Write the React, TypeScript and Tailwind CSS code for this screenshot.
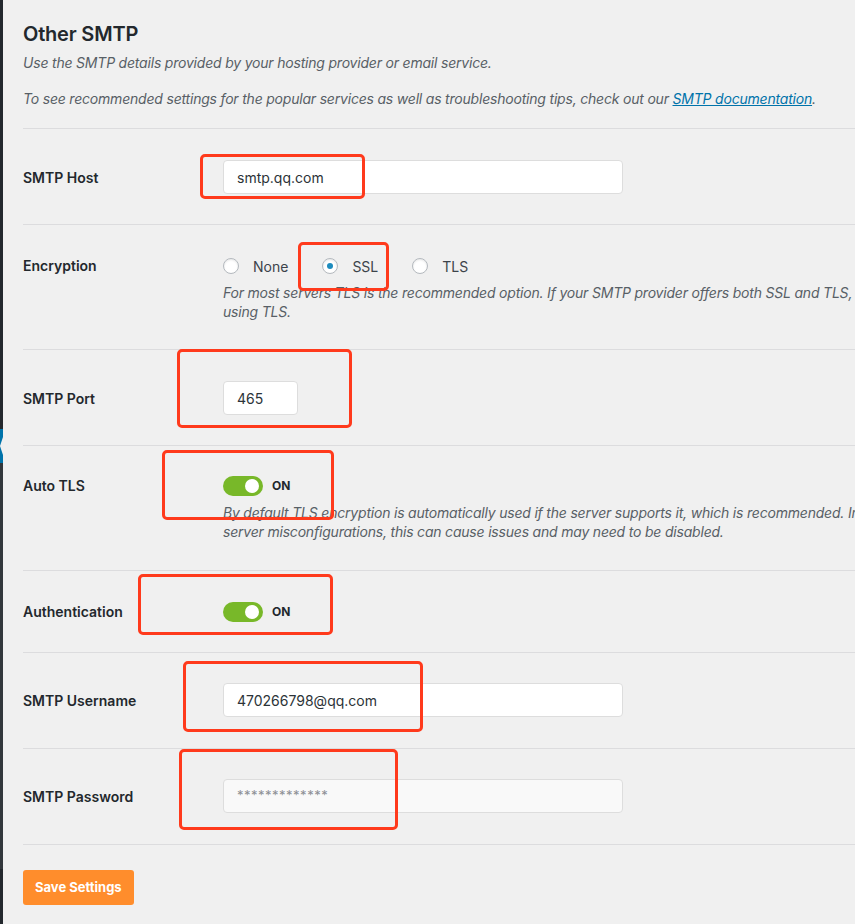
import React from "react";

const font = { fontFamily: "Inter, 'Liberation Sans', sans-serif" };

function Sidebar() {
  return (
    <div className="flex w-[3px] shrink-0 flex-col">
      <div className="h-[429px] bg-[#23282d]" />
      <div className="relative h-[34px] bg-[#0073aa]">
        <svg className="absolute left-0 top-[8px]" width="3" height="18" viewBox="0 0 3 18">
          <path d="M3 0 L0 9 L3 18 Z" fill="#f0f0f0" />
        </svg>
      </div>
      <div className="h-[406px] bg-[#32373c]" />
      <div className="flex-1 bg-[#23282d]" />
    </div>
  );
}

function Row({
  label,
  labelH,
  pt,
  pb,
  children,
}: {
  label: string;
  labelH: string;
  pt: string;
  pb: string;
  children: React.ReactNode;
}) {
  return (
    <div className={["flex border-t border-[#dcdcde]", pt, pb].join(" ")}>
      <div className={["flex w-[200px] shrink-0 items-center text-[14px] font-semibold text-[#23282d]", labelH].join(" ")}>
        {label}
      </div>
      <div className="flex-1">{children}</div>
    </div>
  );
}

function TextInput({ value, w, muted }: { value: string; w: string; muted?: boolean }) {
  return (
    <div
      className={[
        "flex h-[34px] items-center rounded-[4px] border border-[#dddddd] pl-[13px]",
        w,
        muted ? "bg-[#f9f9f9] text-[13px] tracking-[0.5px] text-[#8c8f94]" : "bg-white text-[14px] text-[#2c3338]",
      ].join(" ")}
    >
      {value}
    </div>
  );
}

function Radio({ label, checked }: { label: string; checked?: boolean }) {
  return (
    <div className="flex items-center">
      <span className="flex h-[16px] w-[16px] items-center justify-center rounded-full border border-[#b4b9be] bg-white shadow-[inset_0_1px_2px_rgba(0,0,0,0.1)]">
        {checked ? <span className="h-[6px] w-[6px] rounded-full bg-[#1e8cbe]" /> : null}
      </span>
      <span className="ml-[14px] text-[14px] text-[#3c434a]">{label}</span>
    </div>
  );
}

function Toggle() {
  return (
    <div className="flex h-[20px] items-center">
      <span className="flex h-[20px] w-[40px] items-center justify-end rounded-full bg-[#78b829] pr-[4px]">
        <span className="h-[14px] w-[14px] rounded-full bg-white" />
      </span>
      <span className="ml-[9px] text-[12px] font-bold text-[#23282d]">ON</span>
    </div>
  );
}

function Desc({ children }: { children: React.ReactNode }) {
  return (
    <div className="whitespace-nowrap text-[14px] italic leading-[19px] tracking-[-0.2px] text-[#585f66]">{children}</div>
  );
}

const marks = [
  "left-[200px] top-[154px] w-[165px] h-[45px]",
  "left-[298px] top-[242px] w-[91px] h-[49px]",
  "left-[177px] top-[349px] w-[175px] h-[79px]",
  "left-[162px] top-[450px] w-[172px] h-[70px]",
  "left-[138px] top-[574px] w-[195px] h-[61px]",
  "left-[183px] top-[661px] w-[240px] h-[71px]",
  "left-[179px] top-[749px] w-[219px] h-[81px]",
];

export default function App() {
  return (
    <div className="relative flex h-[924px] w-[855px] overflow-hidden bg-[#f0f0f0]" style={font}>
      <Sidebar />
      <main className="w-[1100px] shrink-0 pl-[20px] pt-[22px]">
        <h2 className="text-[20px] font-semibold leading-[24px] tracking-[-0.2px] text-[#23282d]">Other SMTP</h2>
        <p className="mt-[7px] text-[14px] italic leading-[20px] tracking-[-0.2px] text-[#585f66]">
          Use the SMTP details provided by your hosting provider or email service.
        </p>
        <p className="mt-[16px] text-[14px] italic leading-[20px] tracking-[-0.2px] text-[#585f66]">
          To see recommended settings for the popular services as well as troubleshooting tips, check out our{" "}
          <a className="text-[#0073aa] underline">SMTP documentation</a>.
        </p>

        <div className="mt-[19px] border-b border-[#dcdcde]">
          <Row label="SMTP Host" labelH="h-[34px]" pt="pt-[31px]" pb="pb-[30px]">
            <TextInput value="smtp.qq.com" w="w-[400px]" />
          </Row>
          <Row label="Encryption" labelH="h-[18px]" pt="pt-[31px]" pb="pb-[28px]">
            <div className="flex h-[20px] items-center gap-[34px]">
              <Radio label="None" />
              <Radio label="SSL" checked />
              <Radio label="TLS" />
            </div>
            <div className="mt-[7px]">
              <Desc>
                For most servers TLS is the recommended option. If your SMTP provider offers both SSL and TLS, we
                recommend
                <br />
                using TLS.
              </Desc>
            </div>
          </Row>
          <Row label="SMTP Port" labelH="h-[34px]" pt="pt-[31px]" pb="pb-[30px]">
            <TextInput value="465" w="w-[75px]" />
          </Row>
          <Row label="Auto TLS" labelH="h-[18px]" pt="pt-[30px]" pb="pb-[29px]">
            <Toggle />
            <div className="mt-[7px]">
              <Desc>
                By default TLS encryption is automatically used if the server supports it, which is recommended. In
                some cases, due to
                <br />
                server misconfigurations, this can cause issues and may need to be disabled.
              </Desc>
            </div>
          </Row>
          <Row label="Authentication" labelH="h-[18px]" pt="pt-[31px]" pb="pb-[30px]">
            <Toggle />
          </Row>
          <Row label="SMTP Username" labelH="h-[34px]" pt="pt-[30px]" pb="pb-[31px]">
            <TextInput value="470266798@qq.com" w="w-[400px]" />
          </Row>
          <Row label="SMTP Password" labelH="h-[34px]" pt="pt-[30px]" pb="pb-[31px]">
            <TextInput value="*************" w="w-[400px]" muted />
          </Row>
        </div>

        <button className="mt-[25px] h-[35px] rounded-[3px] bg-[#ff8d2c] px-[12px] text-[13px] font-bold text-white">
          Save Settings
        </button>
      </main>

      {marks.map((m, i) => (
        <div key={i} className={["pointer-events-none absolute rounded-[5px] border-[3px] border-[#ff3a1c]", m].join(" ")} />
      ))}
    </div>
  );
}
